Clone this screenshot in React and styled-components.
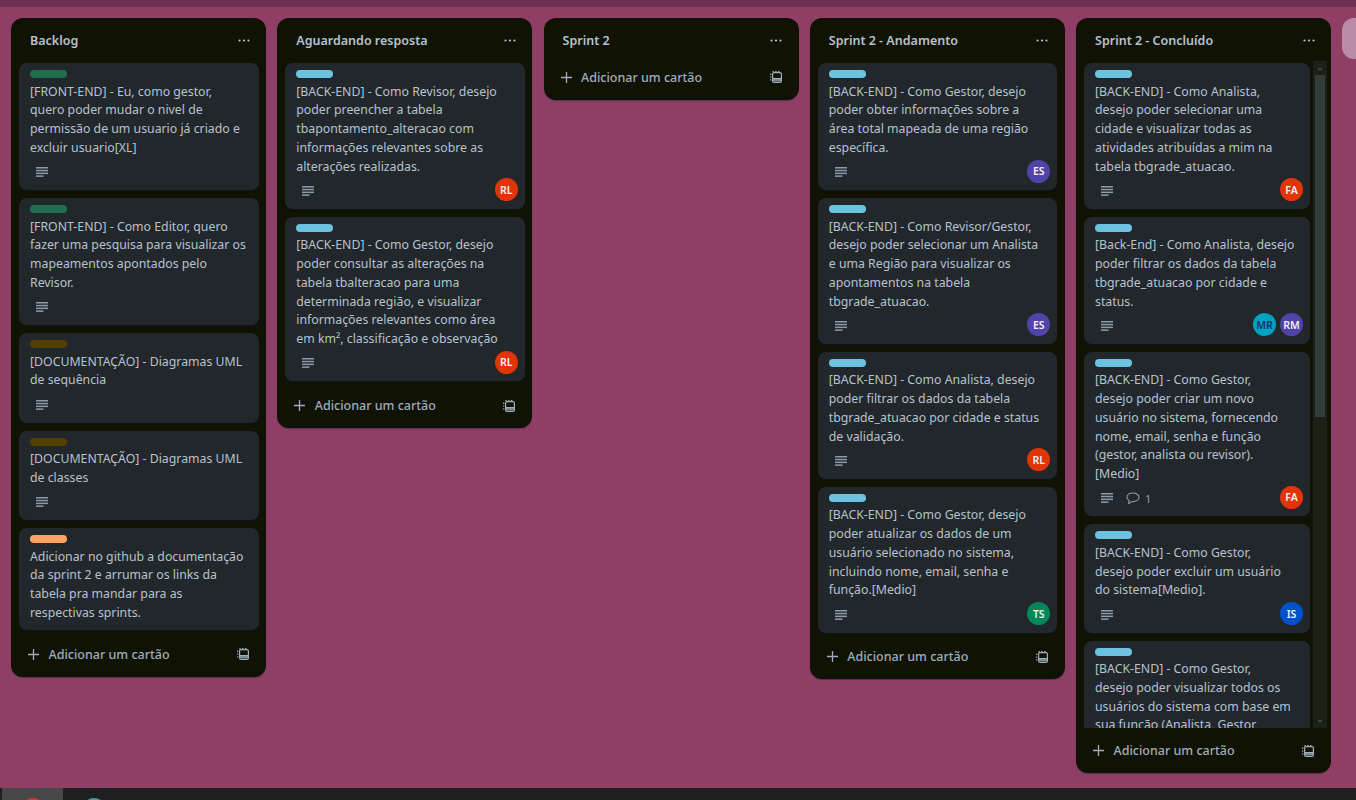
import React from 'react';
import styled, { createGlobalStyle } from 'styled-components';

const GlobalStyle = createGlobalStyle`
  html, body {
    margin: 0;
    height: 100%;
    overflow: hidden;
    background: #8f3f65;
  }
  #root {
    height: 100%;
  }
  * {
    box-sizing: border-box;
  }
`;

const Page = styled.div`
  height: 800px;
  display: flex;
  flex-direction: column;
  overflow: hidden;
  background: #8f3f65;
  color: #b6c2cf;
  font-family: "Noto Sans", "Open Sans", sans-serif;
  font-size: 12.3px;
`;
const TopStrip = styled.div`
  flex: 0 0 7px;
  background: #6f3153;
`;
const Board = styled.div`
  flex: 1;
  min-height: 0;
  display: flex;
  align-items: flex-start;
  gap: 11.25px;
  padding: 11px 0 0 11px;
  overflow: hidden;
`;
const Column = styled.section`
  flex: 0 0 255px;
  min-width: 0;
  max-height: 755px;
  display: flex;
  flex-direction: column;
  background: #101204;
  border-radius: 12px;
  box-shadow: 0 1px 1px rgba(9, 30, 66, 0.4);
`;
const ColumnHeader = styled.header`
  flex: 0 0 36.5px;
  display: flex;
  align-items: flex-start;
  justify-content: space-between;
  padding: 9px 16.5px 0 19px;
`;
const ColumnTitle = styled.h2`
  margin: 0;
  font-size: 12.5px;
  font-weight: 600;
  line-height: 27px;
`;
const Dots = styled.svg`
  width: 12px;
  height: 27px;
  color: #b6c2cf;
`;
const CardList = styled.div`
  display: flex;
  flex-direction: column;
  gap: 8px;
  margin-top: 8.5px;
  padding: 0 7.5px 1.75px 8px;
`;
const ScrollArea = styled.div`
  flex: 1;
  min-height: 0;
  display: flex;
  margin-top: 6.5px;
  padding-right: 4px;
  overflow: hidden;
`;
const ScrollCards = styled.div`
  flex: 1;
  min-width: 0;
  display: flex;
  flex-direction: column;
  gap: 8px;
  padding: 2px 3px 0 8px;
  overflow: hidden;
`;
const Track = styled.div`
  flex: 0 0 14px;
  display: flex;
  flex-direction: column;
  align-items: center;
  background: #1c2016;
`;
const Arrow = styled.i`
  flex: 0 0 14px;
  display: flex;
  align-items: center;
  justify-content: center;
  &::before {
    content: '';
    border-left: 3.5px solid transparent;
    border-right: 3.5px solid transparent;
    ${(props) => props.down
      ? 'border-top: 3.5px solid #3b433d;'
      : 'border-bottom: 3.5px solid #3b433d;'}
  }
`;
const Thumb = styled.div`
  flex: 0 0 342px;
  width: 10px;
  background: #333d38;
`;
const TrackGap = styled.div`
  flex: 1;
`;
const Card = styled.article`
  flex: none;
  padding: 7px 11px 7.5px;
  background: #22272b;
  border-radius: 8px;
  box-shadow: 0 1px 1px rgba(9, 30, 66, 0.4);
`;
const Label = styled.div`
  width: 37px;
  height: 8px;
  border-radius: 4px;
  background: ${(props) => props.color};
`;
const CardText = styled.p`
  margin: 4.5px 0 0;
  font-size: 12.3px;
  line-height: 18.75px;
  white-space: pre;
  color: #b6c2cf;
`;
const CardMeta = styled.div`
  display: flex;
  align-items: center;
  justify-content: space-between;
  height: 25px;
  padding-top: 4px;
`;
const Badges = styled.div`
  display: flex;
  align-items: center;
  gap: 13px;
  padding-left: 6px;
  color: #8c9bab;
`;
const CommentBadge = styled.span`
  display: flex;
  align-items: center;
  gap: 5px;
  font-size: 11px;
`;
const Members = styled.div`
  display: flex;
  gap: 4px;
  margin: -2px -4px 0 0;
`;
const Avatar = styled.span`
  width: 23px;
  height: 23px;
  display: flex;
  align-items: center;
  justify-content: center;
  border-radius: 50%;
  font-size: 10.5px;
  font-weight: 600;
  background: ${(props) => props.bg};
  color: ${(props) => props.fg || '#f1f2f4'};
`;
const ColumnFooter = styled.footer`
  flex: 0 0 45px;
  display: flex;
  align-items: center;
  justify-content: space-between;
  padding: 0 17px;
`;
const AddCard = styled.span`
  display: flex;
  align-items: center;
  gap: 9.5px;
  font-size: 12.5px;
  font-weight: 500;
  color: #9fadbc;
`;
const AddList = styled.div`
  flex: 0 0 255px;
  height: 41px;
  border-radius: 12px;
  background: #bb8ca6;
`;
const Taskbar = styled.div`
  flex: 0 0 12px;
  display: flex;
  background: #1f1f1f;
  overflow: hidden;
  padding-left: 2px;
`;
const TaskTab = styled.div`
  flex: 0 0 61px;
  display: flex;
  justify-content: center;
  background: ${(props) => props.active ? '#474747' : 'transparent'};
`;
const TaskIcon = styled.span`
  width: 24px;
  height: 24px;
  margin-top: 10px;
  border-radius: 50%;
  background: ${(props) => props.color};
`;

const DescriptionIcon = () => (
  <svg width="12" height="10" viewBox="0 0 12 10" fill="currentColor">
    <rect x="0" y="0" width="12" height="1.5" />
    <rect x="0" y="2.8" width="12" height="1.5" />
    <rect x="0" y="5.6" width="12" height="1.5" />
    <rect x="0" y="8.4" width="7.5" height="1.5" />
  </svg>
);

const CommentIcon = () => (
  <svg width="14" height="13" viewBox="0 0 14 13" fill="none" stroke="currentColor" strokeWidth="1.1">
    <path d="M7 1C3.6 1 1 2.9 1 5.3c0 1.4.9 2.6 2.3 3.4L2.6 11.6 6 9.6h1c3.4 0 6-1.9 6-4.3S10.4 1 7 1Z" strokeLinejoin="round" />
  </svg>
);

const PlusIcon = () => (
  <svg width="11" height="11" viewBox="0 0 11 11" stroke="currentColor" strokeWidth="1.3">
    <path d="M5.5 0v11M0 5.5h11" />
  </svg>
);

const TemplateIcon = () => (
  <svg width="12" height="12" viewBox="0 0 12 12" fill="none" stroke="#9fadbc" strokeWidth="1.2">
    <rect x="2.6" y="1.6" width="8.8" height="9.8" rx="1.5" />
    <path d="M3 7.6h8" />
    <path d="M3 9.2h8" strokeWidth="2.4" opacity="0.75" />
    <path d="M.7 2.6v1.4M.7 5.4v1.4M.7 8.2v1.4M2.4.6h1.4M5.2.6h1.4M8 .6h1.4" />
  </svg>
);

const BLUE = '#6cc3e0';
const GREEN = '#216e4e';
const BROWN = '#533f04';
const ORANGE = '#fea362';

const PEOPLE = {
  RL: { bg: '#e13407' },
  FA: { bg: '#e13407' },
  ES: { bg: '#5243aa' },
  RM: { bg: '#5243aa' },
  MR: { bg: '#00a3bf', fg: '#09326c' },
  TS: { bg: '#00875a' },
  IS: { bg: '#0052cc' },
};

const COLUMNS = [
  {
    title: 'Backlog',
    cards: [
      { label: GREEN, desc: true, text: '[FRONT-END] - Eu, como gestor,\nquero poder mudar o nivel de\npermissão de um usuario já criado e\nexcluir usuario[XL]' },
      { label: GREEN, desc: true, text: '[FRONT-END] - Como Editor, quero\nfazer uma pesquisa para visualizar os\nmapeamentos apontados pelo\nRevisor.' },
      { label: BROWN, desc: true, text: '[DOCUMENTAÇÃO] - Diagramas UML\nde sequência' },
      { label: BROWN, desc: true, text: '[DOCUMENTAÇÃO] - Diagramas UML\nde classes' },
      { label: ORANGE, text: 'Adicionar no github a documentação\nda sprint 2 e arrumar os links da\ntabela pra mandar para as\nrespectivas sprints.' },
    ],
  },
  {
    title: 'Aguardando resposta',
    cards: [
      { label: BLUE, desc: true, members: ['RL'], text: '[BACK-END] - Como Revisor, desejo\npoder preencher a tabela\ntbapontamento_alteracao com\ninformações relevantes sobre as\nalterações realizadas.' },
      { label: BLUE, desc: true, members: ['RL'], text: '[BACK-END] - Como Gestor, desejo\npoder consultar as alterações na\ntabela tbalteracao para uma\ndeterminada região, e visualizar\ninformações relevantes como área\nem km², classificação e observação' },
    ],
  },
  { title: 'Sprint 2', cards: [] },
  {
    title: 'Sprint 2 - Andamento',
    cards: [
      { label: BLUE, desc: true, members: ['ES'], text: '[BACK-END] - Como Gestor, desejo\npoder obter informações sobre a\nárea total mapeada de uma região\nespecífica.' },
      { label: BLUE, desc: true, members: ['ES'], text: '[BACK-END] - Como Revisor/Gestor,\ndesejo poder selecionar um Analista\ne uma Região para visualizar os\napontamentos na tabela\ntbgrade_atuacao.' },
      { label: BLUE, desc: true, members: ['RL'], text: '[BACK-END] - Como Analista, desejo\npoder filtrar os dados da tabela\ntbgrade_atuacao por cidade e status\nde validação.' },
      { label: BLUE, desc: true, members: ['TS'], text: '[BACK-END] - Como Gestor, desejo\npoder atualizar os dados de um\nusuário selecionado no sistema,\nincluindo nome, email, senha e\nfunção.[Medio]' },
    ],
  },
  {
    title: 'Sprint 2 - Concluído',
    scroll: true,
    cards: [
      { label: BLUE, desc: true, members: ['FA'], text: '[BACK-END] - Como Analista,\ndesejo poder selecionar uma\ncidade e visualizar todas as\natividades atribuídas a mim na\ntabela tbgrade_atuacao.' },
      { label: BLUE, desc: true, members: ['MR', 'RM'], text: '[Back-End] - Como Analista, desejo\npoder filtrar os dados da tabela\ntbgrade_atuacao por cidade e\nstatus.' },
      { label: BLUE, desc: true, comments: 1, members: ['FA'], text: '[BACK-END] - Como Gestor,\ndesejo poder criar um novo\nusuário no sistema, fornecendo\nnome, email, senha e função\n(gestor, analista ou revisor).\n[Medio]' },
      { label: BLUE, desc: true, members: ['IS'], text: '[BACK-END] - Como Gestor,\ndesejo poder excluir um usuário\ndo sistema[Medio].' },
      { label: BLUE, text: '[BACK-END] - Como Gestor,\ndesejo poder visualizar todos os\nusuários do sistema com base em\nsua função (Analista, Gestor\ne Revisor).' },
    ],
  },
];

function TaskCard({ card }) {
  const hasMeta = card.desc || card.members;
  return (
    <Card>
      <Label color={card.label} />
      <CardText>{card.text}</CardText>
      {hasMeta && (
        <CardMeta>
          <Badges>
            {card.desc && <DescriptionIcon />}
            {card.comments && (
              <CommentBadge>
                <CommentIcon />
                {card.comments}
              </CommentBadge>
            )}
          </Badges>
          {card.members && (
            <Members>
              {card.members.map((initials) => (
                <Avatar key={initials} bg={PEOPLE[initials].bg} fg={PEOPLE[initials].fg}>
                  {initials}
                </Avatar>
              ))}
            </Members>
          )}
        </CardMeta>
      )}
    </Card>
  );
}

function BoardColumn({ column }) {
  const cards = column.cards.map((card) => <TaskCard key={card.text} card={card} />);
  return (
    <Column>
      <ColumnHeader>
        <ColumnTitle>{column.title}</ColumnTitle>
        <Dots viewBox="0 0 12 27" fill="currentColor">
          <circle cx="1.5" cy="13.5" r="1.1" />
          <circle cx="6" cy="13.5" r="1.1" />
          <circle cx="10.5" cy="13.5" r="1.1" />
        </Dots>
      </ColumnHeader>
      {column.scroll && (
        <ScrollArea>
          <ScrollCards>{cards}</ScrollCards>
          <Track>
            <Arrow />
            <Thumb />
            <TrackGap />
            <Arrow down />
          </Track>
        </ScrollArea>
      )}
      {!column.scroll && cards.length > 0 && <CardList>{cards}</CardList>}
      <ColumnFooter>
        <AddCard>
          <PlusIcon />
          Adicionar um cartão
        </AddCard>
        <TemplateIcon />
      </ColumnFooter>
    </Column>
  );
}

export default function App() {
  return (
    <Page>
      <GlobalStyle />
      <TopStrip />
      <Board>
        {COLUMNS.map((column) => (
          <BoardColumn key={column.title} column={column} />
        ))}
        <AddList />
      </Board>
      <Taskbar>
        <TaskTab active>
          <TaskIcon color="#d9342b" />
        </TaskTab>
        <TaskTab>
          <TaskIcon color="#37a5a8" />
        </TaskTab>
      </Taskbar>
    </Page>
  );
}
